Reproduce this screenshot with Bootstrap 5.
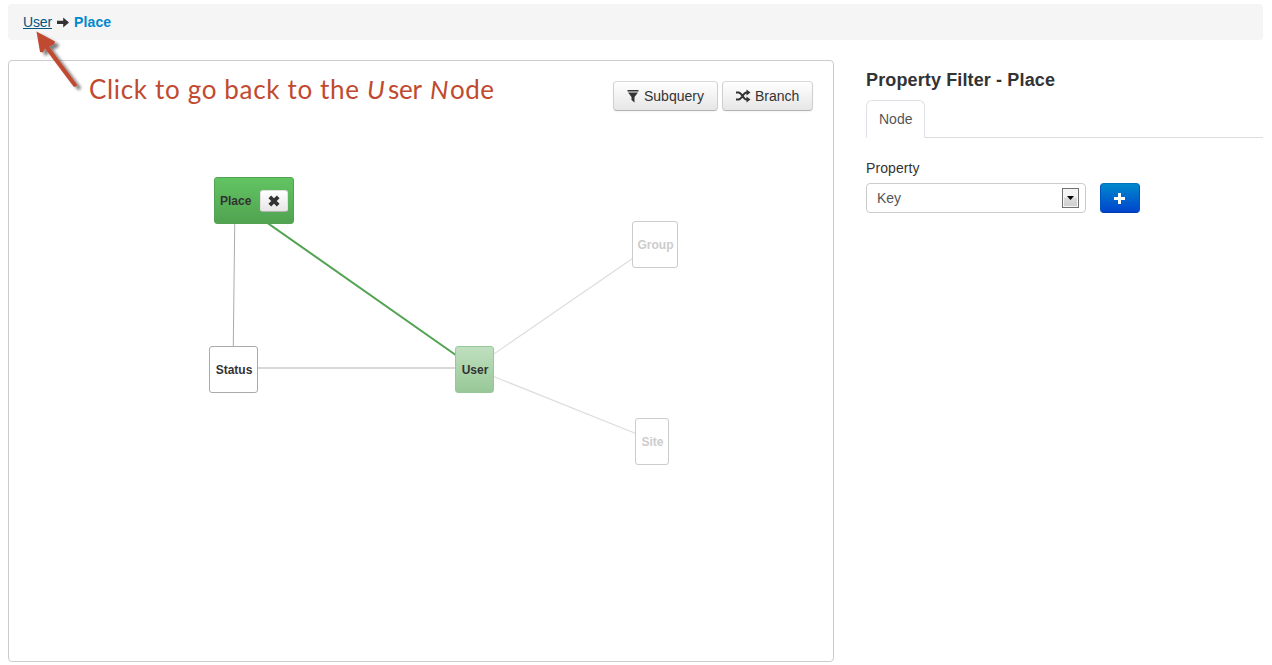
<!DOCTYPE html>
<html lang="en">
<head>
<meta charset="utf-8">
<title>Property Filter</title>
<link href="https://cdn.jsdelivr.net/npm/bootstrap@5.3.0/dist/css/bootstrap.min.css" rel="stylesheet">
<style>
body{font-family:"Liberation Sans",Arial,sans-serif;font-size:14px;line-height:20px;color:#333;background:#fff;height:665px;overflow:hidden;padding:4px 9px 0 8px}
.trail{height:36px;background:#f5f5f5;border-radius:4px;padding:8px 15px;margin-bottom:20px}
.trail a{color:#005580;letter-spacing:-.15px}
.trail .here{color:#08c;letter-spacing:.15px}
.graph{width:826px;height:602px;border:1px solid #ccc;border-radius:4px}
.tool{height:30px;padding:4px 12px;font-size:14px;line-height:20px;color:#333;background:linear-gradient(#fff,#e6e6e6);border:1px solid #ccc;border-color:#d9d9d9 #d0d0d0 #b3b3b3;border-radius:4px;box-shadow:inset 0 1px 0 rgba(255,255,255,.2),0 1px 2px rgba(0,0,0,.05);white-space:nowrap}
.vertex{position:absolute;height:47px;border:1px solid #aaa;border-radius:3px;background:#fff;font-size:12px;font-weight:bold;padding-top:1px;padding-left:1px}
.vertex.faded{border-color:#ccc;color:#ccc}
.vertex.active{background:linear-gradient(#62c462,#51a351);border-color:#51a351}
.vertex.past{background:linear-gradient(#c0dfc0,#97c897);border-color:#97c897}
.remove{width:28px;height:22px;border-radius:3px;border:1px solid #e0e0e0;border-bottom-color:#b3b3b3;background:linear-gradient(#fff,#e6e6e6)}
.panel{width:397px;padding-top:10px}
.panel h1{font-size:18px;line-height:20px;font-weight:bold;margin-bottom:10px;letter-spacing:.13px}
.nav-tabs{border-color:#ddd;height:38px;--bs-nav-tabs-border-color:#ddd}
.nav-tabs .nav-link{height:38px;padding:8px 12px;color:#555!important;line-height:20px}
.pick{width:220px;height:30px;border:1px solid #ccc;border-radius:4px;padding:0 6px 0 10px;color:#555}
.drop{width:17px;height:20px;border:1px solid #707070;background:linear-gradient(#f4f4f4 45%,#dcdcdc 50%,#cfcfcf);box-shadow:inset 0 0 0 1px #f7f7f7}
.add{width:40px;height:30px;background:linear-gradient(#08c,#04c);border:1px solid #0060c0;border-color:#0074bd #0055c0 #003ab0;border-radius:4px}
.note{left:-9px;top:-61px;pointer-events:none;z-index:5}
svg{display:block;flex:none}
</style>
</head>
<body>
<nav class="trail d-flex align-items-center">
  <a href="#">User</a>
  <svg class="mx-1" width="14" height="14"><path d="M1 5.800h6.200V2.600L13 7.500l-5.800 4.900V9.100H1z" fill="#333"/></svg>
  <strong class="here">Place</strong>
</nav>
<div class="d-flex">
  <main class="graph position-relative flex-shrink-0">
    <svg class="position-absolute note" style="z-index:0" width="830" height="660">
      <g fill="none">
        <path d="M235 200L233 370" stroke="#aaa"/>
        <path d="M233 368H475" stroke="#d8d8d8" stroke-width="2"/>
        <path d="M254 213.500L475 368.500" stroke="#51a351" stroke-width="2"/>
        <path d="M475 367L655 243M475 369L652 440" stroke="#ddd" stroke-width="1.200"/>
      </g>
    </svg>
    <div class="d-flex justify-content-end" style="gap:4px;padding:20px 20px 0 0">
      <button class="tool btn d-flex align-items-center" style="width:105px"><svg width="14" height="14" style="margin-right:4px"><path d="M1.500 1h11v1.500h-11zM2 3.500h10L8.500 8v5.500L5.500 11V8z" fill="#333"/></svg>Subquery</button>
      <button class="tool btn d-flex align-items-center" style="width:91px"><svg width="16" height="14" style="margin-right:4px"><g fill="none" stroke="#333" stroke-width="2"><path d="M1 3.500h2.500C7 3.500 8 10.500 11.500 10.500H13M1 10.500h2.500C7 10.500 8 3.500 11.500 3.500H13"/></g><path d="M11.500.5L15.500 3.500l-4 3zM11.500 7.500l4 3-4 3z" fill="#333"/></svg>Branch</button>
    </div>
    <div class="vertex active d-flex align-items-center justify-content-between" style="left:205px;top:116px;width:80px;padding-left:5px;padding-right:5px">Place<button class="remove p-0 d-flex align-items-center justify-content-center"><svg width="12" height="12"><path d="M1.800 1.800l8.400 8.400M10.200 1.800L1.800 10.200" stroke="#333" stroke-width="3.800"/></svg></button></div>
    <div class="vertex faded d-flex align-items-center justify-content-center" style="left:623px;top:160px;width:46px">Group</div>
    <div class="vertex d-flex align-items-center justify-content-center" style="left:200px;top:285px;width:49px">Status</div>
    <div class="vertex past d-flex align-items-center justify-content-center" style="left:446px;top:285px;width:39px">User</div>
    <div class="vertex faded d-flex align-items-center justify-content-center" style="left:626px;top:357px;width:34px">Site</div>
    <svg class="position-absolute note" width="520" height="120">
      <defs><filter id="shade" x="-30%" y="-30%" width="170%" height="170%"><feDropShadow dx="4" dy="3" stdDeviation="1.800" flood-color="#000" flood-opacity=".5"/></filter></defs>
      <path filter="url(#shade)" d="M36.500 31.500L55 41.500 54 44.500 49 46.500 77 84.500Q77 87.500 73.500 86.500L45 48.500 43 52.500 40 52z" fill="#c04a30"/>
      <g fill="#c04a30" font-family="Lato,sans-serif" font-size="26">
        <text x="89" y="99" textLength="270" lengthAdjust="spacing">Click to go back to the</text>
        <text x="367" y="99" font-style="italic">U</text>
        <text x="388" y="99" textLength="34">ser</text>
        <text x="430" y="99" font-style="italic">N</text>
        <text x="450" y="99" textLength="44">ode</text>
      </g>
    </svg>
  </main>
  <aside class="panel" style="margin-left:32px">
    <h1>Property Filter - Place</h1>
    <ul class="nav nav-tabs"><li class="nav-item"><a class="nav-link active" href="#">Node</a></li></ul>
    <label class="d-block" style="margin-top:20px;margin-bottom:5px;letter-spacing:.1px">Property</label>
    <div class="d-flex" style="gap:14px">
      <div class="pick d-flex align-items-center justify-content-between" role="combobox"><span>Key</span><span class="drop d-flex align-items-center justify-content-center"><svg width="7" height="4"><path d="M0 0h7L3.500 4z"/></svg></span></div>
      <button class="add btn p-0 d-flex align-items-center justify-content-center"><svg width="12" height="12"><path d="M5.500 1v11M0 6.500h11" stroke="#fff" stroke-width="3"/></svg></button>
    </div>
  </aside>
</div>
<script src="https://cdn.jsdelivr.net/npm/bootstrap@5.3.0/dist/js/bootstrap.bundle.min.js"></script>
</body>
</html>
